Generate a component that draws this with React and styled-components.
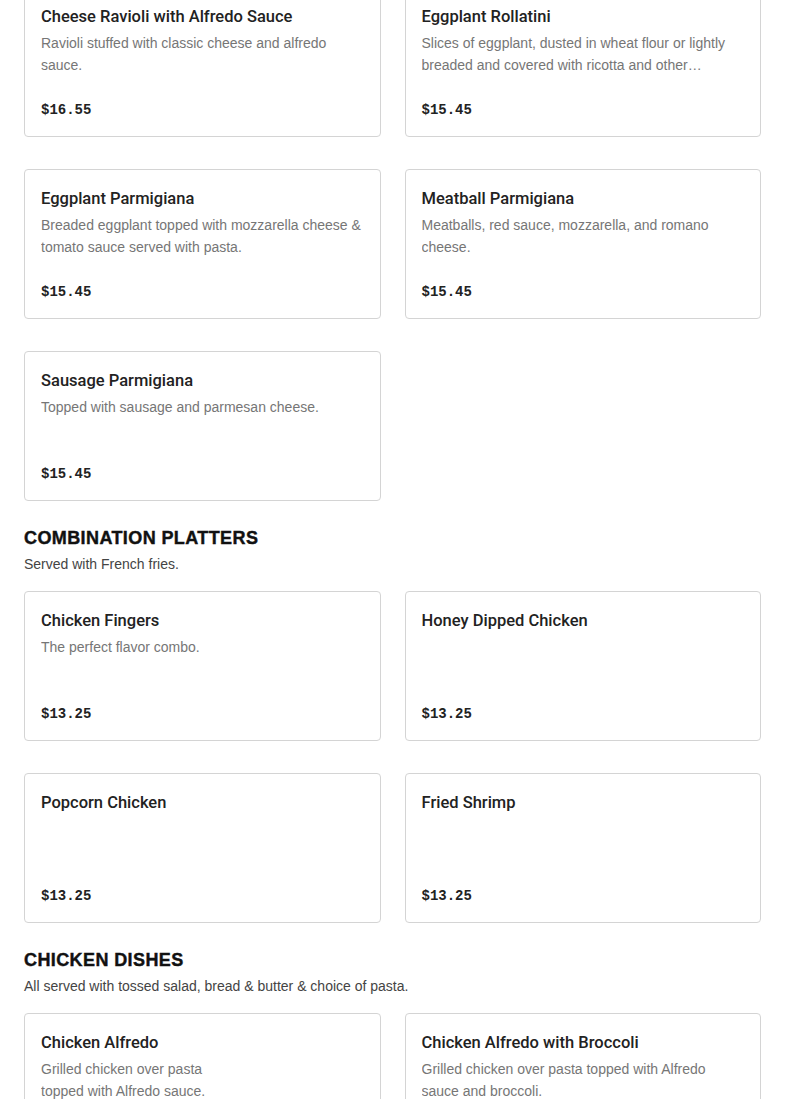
import React from "react";
import styled, { createGlobalStyle } from "styled-components";

const GlobalStyle = createGlobalStyle`
  html, body {
    margin: 0;
    padding: 0;
    background: #ffffff;
    overflow: hidden;
  }
  body {
    font-family: "Liberation Sans", Arial, sans-serif;
    color: #1f1f1f;
  }
`;

const Page = styled.main`
  padding: 0 24px;
  margin-top: -13px;
`;

const Section = styled.section`
  display: flex;
  flex-direction: column;
  margin-bottom: 24px;
`;

const SectionTitle = styled.h2`
  margin: 0;
  font-family: "Liberation Sans", Arial, sans-serif;
  font-weight: 900;
  font-size: 18px;
  line-height: 26px;
  letter-spacing: 0.4px;
  -webkit-text-stroke: 0.4px #111111;
  color: #111111;
  text-transform: uppercase;
`;

const SectionNote = styled.p`
  margin: 0 0 14px;
  font-size: 14px;
  line-height: 26px;
  color: #444444;
`;

const Grid = styled.div`
  display: grid;
  grid-template-columns: 1fr 1fr;
  column-gap: 24px;
  row-gap: 32px;
`;

const Card = styled.article`
  box-sizing: border-box;
  height: 150px;
  padding: 16px 16px 16px;
  border: 1px solid #d4d4d4;
  border-radius: 4px;
  display: flex;
  flex-direction: column;
  background: #fff;
`;

const ItemName = styled.h3`
  margin: 0 0 2px;
  font-family: Roboto, "Liberation Sans", Arial, sans-serif;
  font-size: 16.5px;
  line-height: 26px;
  font-weight: 500;
  color: #222222;
`;

const ItemDesc = styled.p`
  margin: 0;
  font-size: 14px;
  line-height: 22px;
  color: #767676;
  display: -webkit-box;
  -webkit-line-clamp: 2;
  -webkit-box-orient: vertical;
  overflow: hidden;
`;

const Price = styled.span`
  margin-top: auto;
  font-family: "Liberation Mono", "Courier New", monospace;
  font-weight: 700;
  font-size: 14px;
  line-height: 20px;
  color: #222222;
`;

const MenuCard = ({ name, desc, price }) => (
  <Card>
    <ItemName>{name}</ItemName>
    {desc && <ItemDesc>{desc}</ItemDesc>}
    <Price>{price}</Price>
  </Card>
);

const pasta = [
  { name: "Cheese Ravioli with Alfredo Sauce", desc: "Ravioli stuffed with classic cheese and alfredo sauce.", price: "$16.55" },
  { name: "Eggplant Rollatini", desc: "Slices of eggplant, dusted in wheat flour or lightly breaded and covered with ricotta and other cheeses, rolled and baked.", price: "$15.45" },
  { name: "Eggplant Parmigiana", desc: "Breaded eggplant topped with mozzarella cheese & tomato sauce served with pasta.", price: "$15.45" },
  { name: "Meatball Parmigiana", desc: "Meatballs, red sauce, mozzarella, and romano cheese.", price: "$15.45" },
  { name: "Sausage Parmigiana", desc: "Topped with sausage and parmesan cheese.", price: "$15.45" },
];

const platters = [
  { name: "Chicken Fingers", desc: "The perfect flavor combo.", price: "$13.25" },
  { name: "Honey Dipped Chicken", price: "$13.25" },
  { name: "Popcorn Chicken", price: "$13.25" },
  { name: "Fried Shrimp", price: "$13.25" },
];

const chicken = [
  { name: "Chicken Alfredo", desc: <>Grilled chicken over pasta<br />topped with Alfredo sauce.</>, price: "$16.55" },
  { name: "Chicken Alfredo with Broccoli", desc: "Grilled chicken over pasta topped with Alfredo sauce and broccoli.", price: "$17.55" },
];

const App = () => {
  return (
    <>
      <GlobalStyle />
      <Page>
        <Section>
          <Grid>
            {pasta.map((item) => (
              <MenuCard key={item.name} {...item} />
            ))}
          </Grid>
        </Section>
        <Section>
          <SectionTitle>Combination Platters</SectionTitle>
          <SectionNote>Served with French fries.</SectionNote>
          <Grid>
            {platters.map((item) => (
              <MenuCard key={item.name} {...item} />
            ))}
          </Grid>
        </Section>
        <Section>
          <SectionTitle>Chicken Dishes</SectionTitle>
          <SectionNote>All served with tossed salad, bread &amp; butter &amp; choice of pasta.</SectionNote>
          <Grid>
            {chicken.map((item) => (
              <MenuCard key={item.name} {...item} />
            ))}
          </Grid>
        </Section>
      </Page>
    </>
  );
};

export default App;
